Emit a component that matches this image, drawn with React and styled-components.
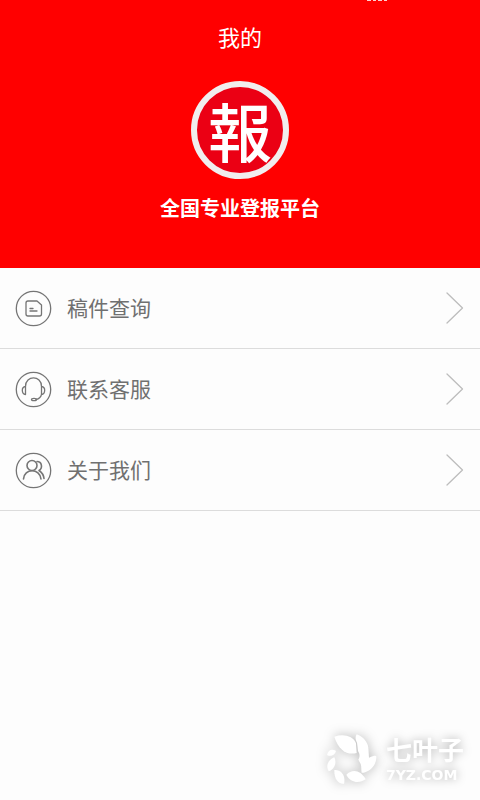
import React from "react";
import styled, { createGlobalStyle } from "styled-components";

const GlobalStyle = createGlobalStyle`
  * { box-sizing: border-box; }
  body {
    margin: 0;
    background: #fdfdfd;
    font-family: "Noto Sans CJK SC", sans-serif;
  }
`;

const Page = styled.div`
  display: flex;
  flex-direction: column;
  min-height: 100vh;
`;

const Header = styled.header`
  position: relative;
  display: flex;
  flex-direction: column;
  align-items: center;
  padding: 18px 16px 44px;
  background: #ff0000;
  color: #fff;
`;

const StatusMarks = styled.svg`
  position: absolute;
  top: 0;
  right: 92px;
`;

const Title = styled.h1`
  margin: 0 0 27px;
  font-size: 22px;
  line-height: 36px;
  font-weight: 400;
`;

const Logo = styled.div`
  display: grid;
  place-items: center;
  width: 98px;
  height: 98px;
  margin-bottom: 13px;
  padding-bottom: 2px;
  border: 6px solid #f1eeee;
  border-radius: 50%;
  background: #eb0014;
  font-family: "Noto Sans CJK TC", sans-serif;
  font-size: 64px;
  line-height: 80px;
  font-weight: 500;
`;

const Slogan = styled.p`
  margin: 0;
  font-size: 20px;
  line-height: 32px;
  font-weight: 700;
`;

const Menu = styled.nav`
  display: flex;
  flex-direction: column;
`;

const MenuRow = styled.button`
  display: flex;
  align-items: center;
  gap: 15px;
  height: 81px;
  padding: 0 16px 0 15px;
  border: 0;
  border-bottom: 1px solid #dcdcdc;
  background: transparent;
  color: #707070;
  font-family: inherit;
  font-size: 21px;
  line-height: 32px;
  text-align: left;
  cursor: pointer;
`;

const RowLabel = styled.span`
  flex: 1;
  padding-bottom: 2px;
`;

const LineIcon = styled.svg`
  flex: none;
  fill: none;
  stroke: ${(p) => p.$color || "#757575"};
  stroke-width: 1.3;
  stroke-linecap: round;
  stroke-linejoin: round;
`;

const Watermark = styled.footer`
  display: flex;
  align-items: center;
  justify-content: flex-end;
  gap: 9px;
  margin-top: auto;
  padding: 0 16px 14px;
  color: #fff;
`;

const Leaves = styled.svg`
  overflow: visible;
  fill: #fff;
  filter: drop-shadow(0 0 6px #b8b8b8);
`;

const WatermarkText = styled.div`
  display: flex;
  flex-direction: column;
  filter: drop-shadow(0 0 5px #b0b0b0);
`;

const WatermarkName = styled.span`
  font-family: "Liberation Sans", "Noto Sans CJK SC", sans-serif;
  font-size: 26px;
  line-height: 30px;
  font-weight: 700;
`;

const WatermarkSite = styled.span`
  font-family: "DejaVu Sans", sans-serif;
  font-size: 14px;
  line-height: 18px;
  font-weight: 700;
`;

const DocumentDrawing = () => (
  <path d="M13 11h9l4.500 4v9q0 2-2 2H13q-2 0-2-2V13q0-2 2-2zM15 18.500h3M15 21h7" />
);

const HeadsetDrawing = () => (
  <>
    <path d="M10.500 15.500C10.500 4 26.500 4 26.500 15.500M10.500 15.500v8C6.500 23 6 16 10.500 15.500zM26.500 15.500v8C30.500 23 31 16 26.500 15.500zM26.500 23.500q-1 4-5.500 5" />
    <ellipse cx="19" cy="28.500" rx="2.500" ry="1.200" />
  </>
);

const PeopleDrawing = () => (
  <g strokeWidth="1.6">
    <circle cx="17" cy="13.500" r="5" />
    <path d="M8.500 27c.5-11 16.500-11 17.500 0M22 9.500c5 0 6 6.500 2 9M24 18.500q4.500 3 5 8" />
  </g>
);

const items = [
  { label: "稿件查询", Drawing: DocumentDrawing },
  { label: "联系客服", Drawing: HeadsetDrawing },
  { label: "关于我们", Drawing: PeopleDrawing },
];

export default function App() {
  return (
    <Page>
      <GlobalStyle />
      <Header>
        <StatusMarks width="22" height="2" aria-hidden="true">
          <path d="M1 0h4M7 0h3M12 0h4M18 0h3" stroke="#ffd0d0" strokeWidth="2" />
        </StatusMarks>
        <Title>我的</Title>
        <Logo>報</Logo>
        <Slogan>全国专业登报平台</Slogan>
      </Header>
      <Menu>
        {items.map(({ label, Drawing }) => (
          <MenuRow key={label} type="button">
            <LineIcon width="37" height="37" viewBox="0 0 37 37" aria-hidden="true">
              <circle cx="18.500" cy="18.500" r="17.200" />
              <Drawing />
            </LineIcon>
            <RowLabel>{label}</RowLabel>
            <LineIcon $color="#bdbdbd" width="18" height="32" viewBox="0 0 18 32" aria-hidden="true">
              <path d="M1 1l15.500 15L1 31" />
            </LineIcon>
          </MenuRow>
        ))}
      </Menu>
      <Watermark>
        <Leaves width="50" height="52" viewBox="50 42 150 156" aria-hidden="true">
          <path d="M72 50C98 40 129 47 137 70L139 99C111 106 85 92 72 50z" />
          <path d="M139 43C158 49 173 68 174 83L176 113C196 104 199 106 198 114C196 140 178 154 160 158L154 158C152 148 154 142 151 132L144 119C150 110 148 100 143 93L140 68C134 58 135 50 139 43z" />
          <path d="M108 164C126 146 151 150 166 178C149 190 120 190 108 164z" />
          <path d="M72 150C91 148 107 165 101 191C82 193 71 174 72 150z" />
          <path d="M72 112C80 128 73 147 55 154C46 139 52 120 72 112z" />
          <path d="M50 105C53 89 66 86 77 93C74 106 61 111 50 105z" />
        </Leaves>
        <WatermarkText>
          <WatermarkName>七叶子</WatermarkName>
          <WatermarkSite>7YZ.COM</WatermarkSite>
        </WatermarkText>
      </Watermark>
    </Page>
  );
}
